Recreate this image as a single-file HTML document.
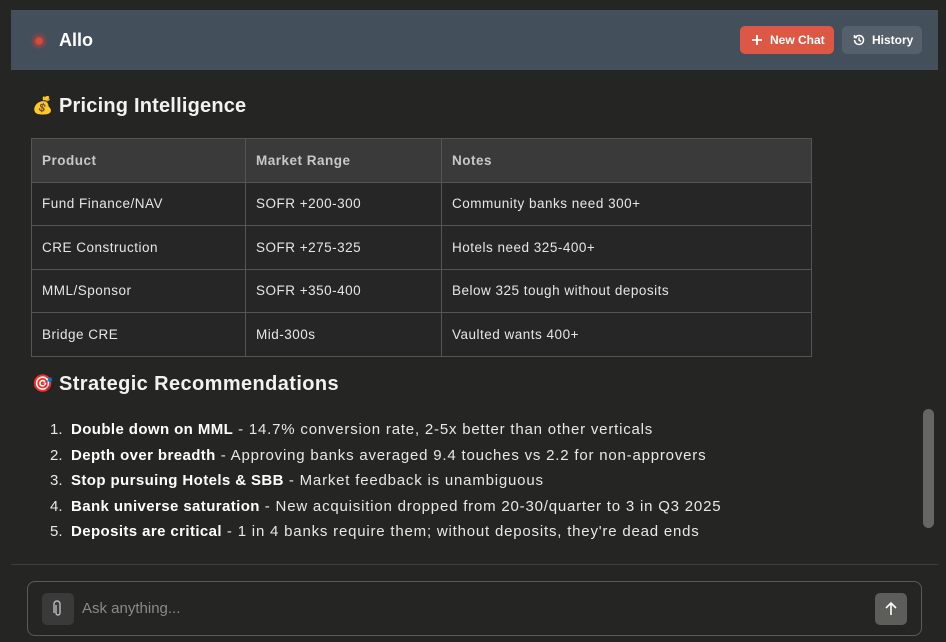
<!DOCTYPE html>
<html><head><meta charset="utf-8"><style>
*{margin:0;padding:0;box-sizing:border-box}
body{width:946px;height:642px;background:#252524;font-family:"Liberation Sans",sans-serif;color:#e8e8e8;position:relative;overflow:hidden}
.hdr{position:absolute;left:11px;top:10px;width:927px;height:60px;background:#434f5b}
.logo{position:absolute;left:19px;top:22px;width:18px;height:18px;border-radius:50%;background:radial-gradient(circle,#d84a3a 0 22%,rgba(200,60,50,.55) 35%,rgba(200,60,50,0) 70%)}
.title{position:absolute;left:48px;top:20px;font-size:18px;font-weight:bold;color:#fff}
.btn{position:absolute;top:16px;height:28px;border-radius:5px;font-size:12px;font-weight:bold;color:#fff;display:flex;align-items:center}
.new{left:729px;width:94px;background:#dc5844;padding-left:10px}
.hist{left:831px;width:80px;background:#56606b;padding-left:10px}
h2{position:absolute;left:59px;font-size:20px;font-weight:bold;color:#f2f2f2}
.emo{position:absolute;left:32px;font-size:17px}
table{position:absolute;left:31px;top:138px;width:781px;border-collapse:collapse;font-size:13.5px;letter-spacing:0.5px}
td,th{border:1px solid #555;padding:0 10px;height:43.5px;text-align:left}
th{background:#3a3a3a;color:#c8c8c8;font-weight:bold}
td{background:#262626;color:#e6e6e6}
ol{position:absolute;left:50px;top:417px;list-style:none;font-size:15px;line-height:25.6px;color:#e8e8e8;letter-spacing:0.8px}
ol li span.n{display:inline-block;width:21px;letter-spacing:0}
ol b{color:#fff;letter-spacing:0.4px}
.sb{position:absolute;left:923px;top:409px;width:11px;height:119px;border-radius:6px;background:#666}
.line{position:absolute;left:11px;top:564px;width:927px;height:1px;background:#3e3e3e}
.inp{position:absolute;left:27px;top:581px;width:895px;height:55px;border:1px solid #5a5a5a;border-radius:8px}
.clip{position:absolute;left:14px;top:11px;width:32px;height:32px;border-radius:5px;background:#3a3a3a}
.ph{position:absolute;left:54px;top:18px;font-size:15px;color:#8a8a8a}
.send{position:absolute;left:847px;top:11px;width:32px;height:32px;border-radius:5px;background:#5d5d5a}
</style></head><body>
<div class="hdr">
<div class="logo"></div>
<div class="title">Allo</div>
<div class="btn new"><svg width="14" height="14" viewBox="0 0 14 14"><path d="M7 2v10M2 7h10" stroke="#fff" stroke-width="1.8"/></svg><span style="margin-left:6px">New Chat</span></div>
<div class="btn hist"><svg width="14" height="14" viewBox="0 0 14 14" fill="none" stroke="#fff" stroke-width="1.5"><path d="M2.5 7a4.5 4.5 0 1 0 1.3-3.2M2.5 2v2.5H5"/><path d="M7 4.5V7l2 1.5"/></svg><span style="margin-left:6px">History</span></div>
</div>
<span class="emo" style="top:96px">💰</span><h2 style="top:95px;letter-spacing:0.2px">Pricing Intelligence</h2>
<table>
<tr><th style="width:214px">Product</th><th style="width:196px">Market Range</th><th>Notes</th></tr>
<tr><td>Fund Finance/NAV</td><td>SOFR +200-300</td><td>Community banks need 300+</td></tr>
<tr><td>CRE Construction</td><td>SOFR +275-325</td><td>Hotels need 325-400+</td></tr>
<tr><td>MML/Sponsor</td><td>SOFR +350-400</td><td>Below 325 tough without deposits</td></tr>
<tr><td>Bridge CRE</td><td>Mid-300s</td><td>Vaulted wants 400+</td></tr>
</table>
<span class="emo" style="top:374px">🎯</span><h2 style="top:373px;letter-spacing:0.4px">Strategic Recommendations</h2>
<ol>
<li><span class="n">1.</span><b>Double down on MML</b> - 14.7% conversion rate, 2-5x better than other verticals</li>
<li><span class="n">2.</span><b>Depth over breadth</b> - Approving banks averaged 9.4 touches vs 2.2 for non-approvers</li>
<li><span class="n">3.</span><b>Stop pursuing Hotels &amp; SBB</b> - Market feedback is unambiguous</li>
<li><span class="n">4.</span><b>Bank universe saturation</b> - New acquisition dropped from 20-30/quarter to 3 in Q3 2025</li>
<li><span class="n">5.</span><b>Deposits are critical</b> - 1 in 4 banks require them; without deposits, they're dead ends</li>
</ol>
<div class="sb"></div>
<div class="line"></div>
<div class="inp">
<div class="clip"><svg width="32" height="32" viewBox="0 0 32 32" fill="none" stroke="#bbb" stroke-width="1.4"><path d="M14 12v8a2 2 0 0 0 4 0v-9a3 3 0 0 0-6 0v9"/></svg></div>
<div class="ph">Ask anything...</div>
<div class="send"><svg width="32" height="32" viewBox="0 0 32 32" fill="none" stroke="#fff" stroke-width="1.6"><path d="M16 22V10M11 15l5-5 5 5"/></svg></div>
</div>
</body></html>
